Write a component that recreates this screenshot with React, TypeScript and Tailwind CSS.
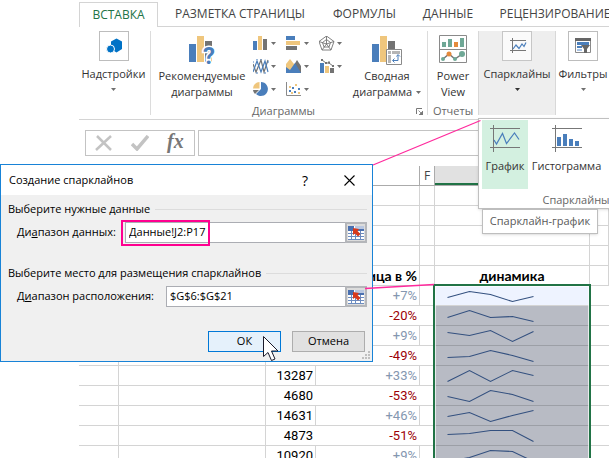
import { useState } from 'react'
import type { ReactNode } from 'react'

const BLUE = '#4a7ebb'
const TAN = '#efc67d'
const GRAY = '#737373'

const tabs = [
  { name: 'РАЗМЕТКА СТРАНИЦЫ', width: 'w-[160px]' },
  { name: 'ФОРМУЛЫ', width: 'w-[89px]' },
  { name: 'ДАННЫЕ', width: 'w-[78px]' },
  { name: 'РЕЦЕНЗИРОВАНИЕ', width: 'w-[136px]' },
]

const rows = [
  { count: '', diff: '+7%', trend: [11, 5, 8, 15, 10] },
  { count: '', diff: '-20%', trend: [11, 4, 11, 10, 15] },
  { count: '', diff: '+9%', trend: [6, 9, 4, 15, 5] },
  { count: '', diff: '-49%', trend: [11, 10, 4, 9, 15] },
  { count: '13287', diff: '+33%', trend: [15, 4, 15, 4, 9] },
  { count: '4680', diff: '-53%', trend: [10, 15, 4, 8, 15] },
  { count: '14631', diff: '+46%', trend: [10, 6, 15, 9, 4] },
  { count: '4873', diff: '-51%', trend: [8, 7, 4, 4, 15] },
  { count: '10920', diff: '+9%', trend: [15, 11, 4, 5, 15] },
]

const Arrow = ({ dark }: { dark?: boolean }) => (
  <svg width="5" height="3" viewBox="0 0 5 3" className="shrink-0">
    <path d="M0 0h5L2.5 3z" fill={dark ? '#333' : '#6f6f6f'} />
  </svg>
)

const Sparkline = ({ points }: { points: number[] }) => {
  const xs = [12.5, 34.5, 55.5, 77.5, 98.5]
  return (
    <svg width="110" height="19" className="block" aria-hidden="true">
      <polyline
        points={points.map((y, i) => `${xs[i]},${y + 0.5}`).join(' ')}
        fill="none"
        stroke="#33507f"
        strokeWidth="1.1"
      />
    </svg>
  )
}

const smallCharts: { name: string; icon: ReactNode }[] = [
  {
    name: 'Гистограмма',
    icon: (
      <>
        <path d="M0 5h4v9H0z" fill={BLUE} />
        <path d="M5 0h4v14H5z" fill={TAN} />
        <path d="M10 3h4v11h-4z" fill={GRAY} />
      </>
    ),
  },
  {
    name: 'Линейчатая',
    icon: (
      <>
        <path d="M0 0h9v4H0z" fill={BLUE} />
        <path d="M0 5h14v4H0z" fill={TAN} />
        <path d="M0 10h11v4H0z" fill={GRAY} />
      </>
    ),
  },
  {
    name: 'Лепестковая',
    icon: (
      <g fill="none" stroke={GRAY} strokeWidth="0.9">
        <path d="M7.5 0l7.5 5.5-3 8.5H3L0 5.5z" />
        <path d="M7.5 3.5l4 3-1.5 4.5H5L3.5 6.5z" />
        <path d="M7.5 0v8M0 5.5l7.5 2.5L15 5.5M3 14l4.5-6 4.5 6" />
      </g>
    ),
  },
  {
    name: 'График',
    icon: (
      <g fill="none" strokeWidth="1.2">
        <path d="M0 5l3 8L8 1l3 12 4-12" stroke={GRAY} />
        <path d="M0 13L4 2l4 11 4-11 3 11" stroke={BLUE} />
        <path d="M0 3h1M3 0h2M7 0h2M3 14h2M11 14h2M14 3h2" stroke={BLUE} />
      </g>
    ),
  },
  {
    name: 'С областями',
    icon: (
      <>
        <path d="M8 6l3-5 4 6v7H8z" fill={GRAY} />
        <path d="M0 5l4-5 4 5 2 6H0z" fill={TAN} />
        <path d="M0 14V8l4 3 5-7 6 10z" fill={BLUE} />
      </>
    ),
  },
  {
    name: 'Комбинированная',
    icon: (
      <>
        <path d="M1 4h4v10H1z" fill={BLUE} />
        <path d="M6 7h4v7H6z" fill={TAN} />
        <path d="M11 9h4v5h-4z" fill={GRAY} />
        <path d="M3 1l4 3h3l4 3" stroke={GRAY} fill="none" />
        <path d="M2 0h2v2H2zM6 3h2v2H6zM9 2.5h2v2H9zM13 6h2v2h-2z" fill={GRAY} />
      </>
    ),
  },
  {
    name: 'Круговая',
    icon: (
      <>
        <path d="M8 0a7 7 0 1 1-5 12l5-5z" fill={BLUE} />
        <path d="M6.5 6.5H0A6.5 6.5 0 0 1 6.5 0z" fill={TAN} />
        <path d="M0 8h6l-4 4A6 6 0 0 1 0 8z" fill={GRAY} />
      </>
    ),
  },
  {
    name: 'Точечная',
    icon: (
      <>
        <path d="M0.5 0v13.5H15" stroke="#8a8a8a" fill="none" />
        <path d="M3 8h2v2H3zM6 5h2v2H6zM8 9h2v2H8zM12 6h2v2h-2z" fill={BLUE} />
        <path d="M3 4h2v2H3zM9 2h2v2H9zM5 10h2v2H5zM12 10h2v2h-2z" fill={TAN} />
      </>
    ),
  },
]

const CollapseButton = ({ label }: { label: string }) => (
  <button
    type="button"
    aria-label={label}
    className="flex w-[22px] items-center justify-center border-2 border-[#b4b6ba] bg-[#dcdcdc]"
  >
    <svg width="16" height="14" viewBox="0 0 16 14">
      <path d="M0 0h16v14H0z" fill="#fff" />
      <path d="M0 0h6v3H0zM0 3h16v2H0z" fill="#4a70b0" />
      <path d="M7 0h9v3H7z" fill="#b9c7e0" />
      <path d="M0 7.5h16M0 10.5h16M0 13.5h16M3.5 5v9M7.5 5v9M12.5 5v9" stroke="#6c8cc0" />
      <path d="M5 2l6 1-1.5 2 3 3-2.5 2.5-3-3L5 9z" fill="#d8391c" />
    </svg>
  </button>
)

const Separator = () => <div className="h-[84px] w-px shrink-0 bg-[#dcdcdc]" />

const SparklineMenu = () => (
  <div className="absolute left-0 top-[87px] h-[91px] w-[196px] border border-[#c0c0c0] bg-white shadow-sm">
    <div className="flex pl-[3px] pt-px">
      <button type="button" className="flex h-[69px] w-[46px] flex-col items-center bg-[#d3f0e0] pt-[5px]">
        <svg width="30" height="27" viewBox="0 0 30 27" fill="none">
          <path d="M3.5 0v27M0 3.5h30M0 22.5h30" stroke="#777" />
          <path d="M4 15l2.5 4 6-10.5 4 10L24.5 8l4.5 6.5" stroke={BLUE} strokeWidth="1.2" />
        </svg>
        <span className="mt-[6px] leading-4">График</span>
      </button>
      <button type="button" className="flex h-[69px] w-[77px] flex-col items-center pt-[5px]">
        <svg width="30" height="27" viewBox="0 0 30 27" fill="none">
          <path d="M3.5 0v27M0 3.5h30M0 22.5h30" stroke="#777" />
          <path d="M5 12h4v9H5zM11 9h4v12h-4zM17 14h4v7h-4zM23 16h4v5h-4z" fill={BLUE} />
        </svg>
        <span className="mt-[6px] leading-4">Гистограмма</span>
      </button>
    </div>
    <div className="mt-[3px] text-center leading-4 text-[#666]">Спарклайны</div>
    <div
      role="tooltip"
      className="absolute left-[3px] top-[90px] flex h-[25px] w-[116px] items-center justify-center border border-[#bebebe] bg-white text-[#595959] shadow-sm"
    >
      Спарклайн-график
    </div>
  </div>
)

const Ribbon = () => (
  <header className="relative z-10 text-[11px] text-[#333]">
    <nav className="flex h-[27px] pt-[2px] text-xs text-[#444]">
      <div className="w-[2px] border-b border-[#d4d4d4]" />
      <button
        type="button"
        className="w-[79px] shrink-0 border-x border-t border-[#d4d4d4] text-[#217346]"
      >
        ВСТАВКА
      </button>
      <div className="flex grow border-b border-[#d4d4d4] pl-[2px]">
        {tabs.map((tab) => (
          <button key={tab.name} type="button" className={`${tab.width} shrink-0 whitespace-nowrap`}>
            {tab.name}
          </button>
        ))}
      </div>
    </nav>

    <div className="flex h-[93px] border-b border-[#d4d4d4] pt-1">
      <button type="button" className="flex w-[71px] shrink-0 flex-col items-center pr-[2px]">
        <span className="flex size-[30px] items-center justify-center border border-[#bdbdbd]">
          <svg width="30" height="30" viewBox="0 0 30 30" className="shrink-0">
            <path d="M17.5 7.5l5.5 3v7.5l-5.5 3.5-5.5-3.5v-7.5z" fill="#0072c6" />
            <circle cx="11.5" cy="18" r="4" fill="#0072c6" stroke="#fff" />
          </svg>
        </span>
        <span className="mt-[5px] leading-4">Надстройки</span>
        <span className="mt-[6px]">
          <Arrow />
        </span>
      </button>
      <Separator />

      <section className="flex w-[276px] shrink-0 flex-col">
        <div className="flex h-[72px]">
          <button type="button" className="flex w-[102px] shrink-0 flex-col items-center pt-[5px] leading-4">
            <svg width="30" height="30" viewBox="0 0 30 30" className="ml-1 overflow-visible">
              <path d="M0 8h7v18H0z" fill={BLUE} />
              <path d="M8 0h7v26H8z" fill={TAN} />
              <path d="M16 5h7v21h-7z" fill={GRAY} />
              <text
                x="14"
                y="28"
                fontFamily="Roboto"
                fontSize="24"
                fontWeight="700"
                fill={BLUE}
                stroke="#fff"
                strokeWidth="3"
                paintOrder="stroke"
              >
                ?
              </text>
            </svg>
            <span className="mt-[2px]">Рекомендуемые</span>
            <span>диаграммы</span>
          </button>
          <div className="grid h-[69px] w-[99px] shrink-0 grid-cols-3 grid-rows-3">
            {smallCharts.map((chart) => (
              <button
                key={chart.name}
                type="button"
                aria-label={chart.name}
                className="flex items-center gap-[2px] pt-px"
              >
                <svg width="16" height="15" viewBox="0 0 16 15" className="shrink-0">
                  {chart.icon}
                </svg>
                <Arrow />
              </button>
            ))}
          </div>
          <button type="button" className="flex w-[70px] shrink-0 flex-col items-center pt-[5px] leading-4">
            <svg width="30" height="30" viewBox="0 0 30 30">
              <path d="M0 8h7v18H0z" fill={BLUE} />
              <path d="M8 0h7v26H8z" fill={TAN} />
              <path d="M16 5h7v9h-7z" fill={GRAY} />
              <path d="M14.5 13.5h15v15h-15z" fill="#fff" stroke="#8a8a8a" />
              <path d="M16 15h3v3h-3zM20 15h8v3h-8zM16 19h3v8h-3z" fill="#b5b5b5" />
              <path d="M26 19v5.5h-5M24.5 20.5L26 18.5l2 2M22.5 22.5l-2 2 2 2" stroke={BLUE} fill="none" />
            </svg>
            <span className="mt-[2px]">Сводная</span>
            <span className="flex items-center gap-1">
              диаграмма <Arrow />
            </span>
          </button>
        </div>
        <div className="flex items-center justify-end pr-1 leading-4 text-[#666]">
          <span className="grow text-center">Диаграммы</span>
          <button type="button" aria-label="Параметры диаграмм">
            <svg width="7" height="7" viewBox="0 0 7 7" className="block">
              <path d="M0.5 6V0.5H6" stroke="#777" fill="none" />
              <path d="M7 3v4H3zM2.5 2.5l3 3" fill="#777" stroke="#777" strokeWidth="0.8" />
            </svg>
          </button>
        </div>
      </section>
      <Separator />

      <section className="flex w-[50px] shrink-0 flex-col items-center leading-4">
        <button type="button" className="flex h-[72px] flex-col items-center pt-1">
          <svg width="28" height="28" viewBox="0 0 28 28">
            <path d="M0.5 0.5h27v27H0.5zM0 14.5h28" fill="#fff" stroke="#8a8a8a" />
            <path d="M3 7h4v5H3zM9 4h4v8H9zM21 3h4v9h-4z" fill="#6fa896" />
            <path d="M15 7h4v5h-4z" fill="#e48a3c" />
            <path d="M4 24l6-5 6 5 7-5" stroke="#777" fill="none" strokeWidth="1.5" />
            <circle cx="4" cy="24" r="2" fill="#6fa896" />
            <circle cx="10" cy="19" r="2.5" fill="#e48a3c" />
            <circle cx="16" cy="24" r="2" fill="#6fa896" />
            <circle cx="23" cy="19" r="3" fill="#6fa896" />
          </svg>
          <span className="mt-[5px]">Power</span>
          <span>View</span>
        </button>
        <span className="text-[#666]">Отчеты</span>
      </section>

      <div className="relative h-[84px] w-[78px] shrink-0">
        <button
          type="button"
          aria-expanded="true"
          className="flex size-full flex-col items-center border-x border-[#d8d8d8] bg-[#eeeeee]"
        >
          <span className="flex size-[30px] items-center justify-center border border-[#c6c6c6] bg-[#fafafa]">
            <svg width="30" height="30" viewBox="0 0 30 30" fill="none" className="shrink-0">
              <path d="M10.5 7v15M8 9.5h16M8 19.5h16" stroke="#777" />
              <path d="M11 18l3-4 3 3.5 3-4.5 2 2.5 2-4" stroke={BLUE} strokeWidth="1.2" />
            </svg>
          </span>
          <span className="mt-[5px] leading-4">Спарклайны</span>
          <span className="mt-[6px]">
            <Arrow dark />
          </span>
        </button>
        <SparklineMenu />
      </div>

      <button type="button" className="flex w-[54px] shrink-0 flex-col items-center">
        <span className="flex size-[30px] items-center justify-center border border-[#bdbdbd]">
          <svg width="30" height="30" viewBox="0 0 30 30" className="shrink-0">
            <path d="M7.5 7.5h15v14h-15z" fill="#fff" stroke="#8a8a8a" />
            <path d="M7 7h16v3H7z" fill="#666" />
            <path d="M9 11h12v3H9zM9 15h5v2H9z" fill={BLUE} />
            <path d="M9 18h5v2H9z" fill="#a9c3e4" />
            <path d="M13 14h9l-3 4v4h-3v-4z" fill="#666" />
          </svg>
        </span>
        <span className="mt-[5px] leading-4">Фильтры</span>
        <span className="mt-[6px]">
          <Arrow />
        </span>
      </button>
    </div>
  </header>
)

const FormulaBar = () => (
  <div className="flex h-[46px] gap-[3px] overflow-hidden pl-[6px] pt-[10px]">
    <div className="flex h-[26px] w-[110px] shrink-0 items-center gap-[18px] border border-[#c3c3c3] pl-[9px]">
      <button type="button" aria-label="Отмена ввода">
        <svg width="18" height="16" viewBox="0 0 18 16" className="block">
          <path d="M2 1l14 14M16 1L1 15" stroke="#c3c3c3" strokeWidth="2.5" fill="none" />
        </svg>
      </button>
      <button type="button" aria-label="Ввод">
        <svg width="18" height="16" viewBox="0 0 18 16" className="block">
          <path d="M1 9l5 5L17 1" stroke="#c3c3c3" strokeWidth="3.5" fill="none" />
        </svg>
      </button>
      <button
        type="button"
        className="pb-1 font-['Liberation_Serif',serif] text-[20px] font-bold italic leading-5 text-[#777]"
      >
        fx
      </button>
    </div>
    <input
      aria-label="Строка формул"
      className="h-[26px] min-w-0 grow border border-r-0 border-[#c3c3c3] px-2"
    />
  </div>
)

const Sheet = () => (
  <table className="w-full table-fixed border-separate border-spacing-0 font-['Roboto',sans-serif] text-[13px] leading-[19px] text-black [&_td]:h-5 [&_td]:border-b [&_td]:border-[#d4d4d4] [&_td]:p-0 [&_th]:h-5 [&_th]:p-0">
    <colgroup>
      <col className="w-[40px]" />
      <col className="w-[147px]" />
      <col className="w-[50px]" />
      <col className="w-[104px]" />
      <col className="w-[15px]" />
      <col className="w-[155px]" />
      <col />
    </colgroup>
    <thead>
      <tr className="font-['Open_Sans',sans-serif] text-xs text-[#444] [&>th]:border-b [&>th]:border-[#ababab] [&>th]:font-normal">
        <th />
        <th />
        <th />
        <th className="border-r border-r-[#d4d4d4]" />
        <th className="border-r border-r-[#d4d4d4]">F</th>
        <th className="bg-[#e1e1e1] shadow-[inset_0_-2px_0_#217346]" />
        <th />
      </tr>
    </thead>
    <tbody>
      {[1, 2, 3, 4].map((n) => (
        <tr key={n} className="[&>td]:border-r">
          <td />
          <td />
          <td />
          <td />
          <td />
          <td />
          <td />
        </tr>
      ))}
      <tr className="font-['Lato','Noto_Sans',sans-serif] text-[14px] font-bold [&>td]:border-r">
        <td />
        <td />
        <td />
        <td className="whitespace-nowrap pr-[2px]! text-right">разница в %</td>
        <td />
        <td className="text-center">динамика</td>
        <td />
      </tr>
      {rows.map((row, i) => {
        const up = row.diff.startsWith('+')
        return (
          <tr key={i}>
            <td className="border-r" />
            <td className="border-r" />
            <td className={up ? 'border-r pr-[2px]! text-right' : 'pr-[3px]! text-right'}>{row.count}</td>
            <td
              className={
                up
                  ? 'border-r pr-[2px]! text-right text-[#8497b0]'
                  : 'pr-[3px]! text-right text-[#9c0006]'
              }
            >
              {row.diff}
            </td>
            <td />
            <td className={i === 0 ? 'relative bg-[#eef3ff]' : 'border-[#9c9fa6]! bg-[#b8bbc4]'}>
              <Sparkline points={row.trend} />
              {i === 0 && (
                <div className="pointer-events-none absolute -left-[2px] -top-[2px] h-[400px] w-[158px] border-2 border-[#217346] ring-1 ring-inset ring-white/70" />
              )}
            </td>
            <td />
          </tr>
        )
      })}
    </tbody>
  </table>
)

const SectionTitle = ({ children }: { children: ReactNode }) => (
  <div className="flex items-center gap-[5px] leading-4">
    <h3>{children}</h3>
    <div className="h-px grow bg-[#dcdcdc]" />
  </div>
)

const SparklineDialog = () => {
  const [source, setSource] = useState('Данные!J2:P17')
  const [location, setLocation] = useState('$G$6:$G$21')

  return (
    <div
      role="dialog"
      aria-labelledby="dialog-title"
      className="absolute left-0 top-[164px] z-20 w-[373px] border border-[#1883d7] bg-[#f0f0f0] text-[11px] text-black"
    >
      <div className="flex h-[30px] items-center bg-white pl-2 pr-[17px]">
        <h2 id="dialog-title" className="grow">
          Создание спарклайнов
        </h2>
        <button type="button" className="mr-[36px] text-[14px]">
          ?
        </button>
        <button type="button" aria-label="Закрыть">
          <svg width="11" height="11" viewBox="0 0 11 11" className="block">
            <path d="M0.5 0.5l10 10M10.5 0.5l-10 10" stroke="#000" strokeWidth="1.1" />
          </svg>
        </button>
      </div>

      <form className="pb-[9px] pl-[7px] pr-[5px] pt-[6px]" onSubmit={(e) => e.preventDefault()}>
        <SectionTitle>Выберите нужные данные</SectionTitle>
        <div className="mt-[5px] flex h-[21px] items-center pl-[9px]">
          <label htmlFor="source" className="w-[108px] whitespace-nowrap">
            Ди<u>а</u>пазон данных:
          </label>
          <div className="relative flex h-[21px] grow">
            <input
              id="source"
              className="min-w-0 grow border border-r-0 border-[#abadb3] bg-white px-[3px]"
              value={source}
              onChange={(e) => setSource(e.target.value)}
            />
            <CollapseButton label="Свернуть диалог" />
            <div className="pointer-events-none absolute -left-1 -top-[2px] h-[26px] w-[89px] border-2 border-[#ff0090]" />
          </div>
        </div>

        <div className="h-[22px]" />
        <SectionTitle>Выберите место для размещения спарклайнов</SectionTitle>
        <div className="mt-[5px] flex h-[21px] items-center pl-[9px]">
          <label htmlFor="location" className="w-[149px] whitespace-nowrap">
            Д<u>и</u>апазон расположения:
          </label>
          <div className="flex h-[21px] grow">
            <input
              id="location"
              className="min-w-0 grow border border-r-0 border-[#abadb3] bg-white px-[3px]"
              value={location}
              onChange={(e) => setLocation(e.target.value)}
            />
            <CollapseButton label="Свернуть диалог" />
          </div>
        </div>

        <div className="mt-6 flex justify-end gap-[11px] pr-[2px]">
          <button type="submit" className="h-[21px] w-[73px] border border-[#0078d7] bg-[#e5f1fb]">
            ОК
          </button>
          <button type="button" className="h-[21px] w-[73px] border border-[#adadad] bg-[#e1e1e1]">
            Отмена
          </button>
        </div>
      </form>

      <svg width="8" height="8" viewBox="0 0 8 8" className="absolute bottom-[2px] right-[2px]">
        <path d="M6 0h2v2H6zM3 3h2v2H3zM6 3h2v2H6zM0 6h2v2H0zM3 6h2v2H3zM6 6h2v2H6z" fill="#bfbfbf" />
      </svg>
      <svg width="17" height="26" viewBox="0 0 17 26" className="absolute left-[262px] top-[171px]">
        <path
          d="M0.5 0.5v20l4.5-4 3.5 8 3.5-1.5-3.5-8h6.5z"
          fill="#fff"
          stroke="#1a1a2a"
          strokeWidth="1"
        />
      </svg>
    </div>
  )
}

const App = () => (
  <div className="relative h-screen overflow-hidden bg-white pl-[79px] font-['Open_Sans','Noto_Sans',sans-serif]">
    <Ribbon />
    <FormulaBar />
    <Sheet />
    <SparklineDialog />
    {/* callout lines tying the dialog to the ribbon and the selected range */}
    <svg
      width="500"
      height="300"
      viewBox="0 0 500 300"
      className="pointer-events-none absolute left-0 top-0 z-30"
      fill="none"
      stroke="#ff2a9d"
      strokeWidth="1.3"
    >
      <path d="M373 165l107.5-44.5M365 288.5l69-4" />
    </svg>
  </div>
)

export default App
